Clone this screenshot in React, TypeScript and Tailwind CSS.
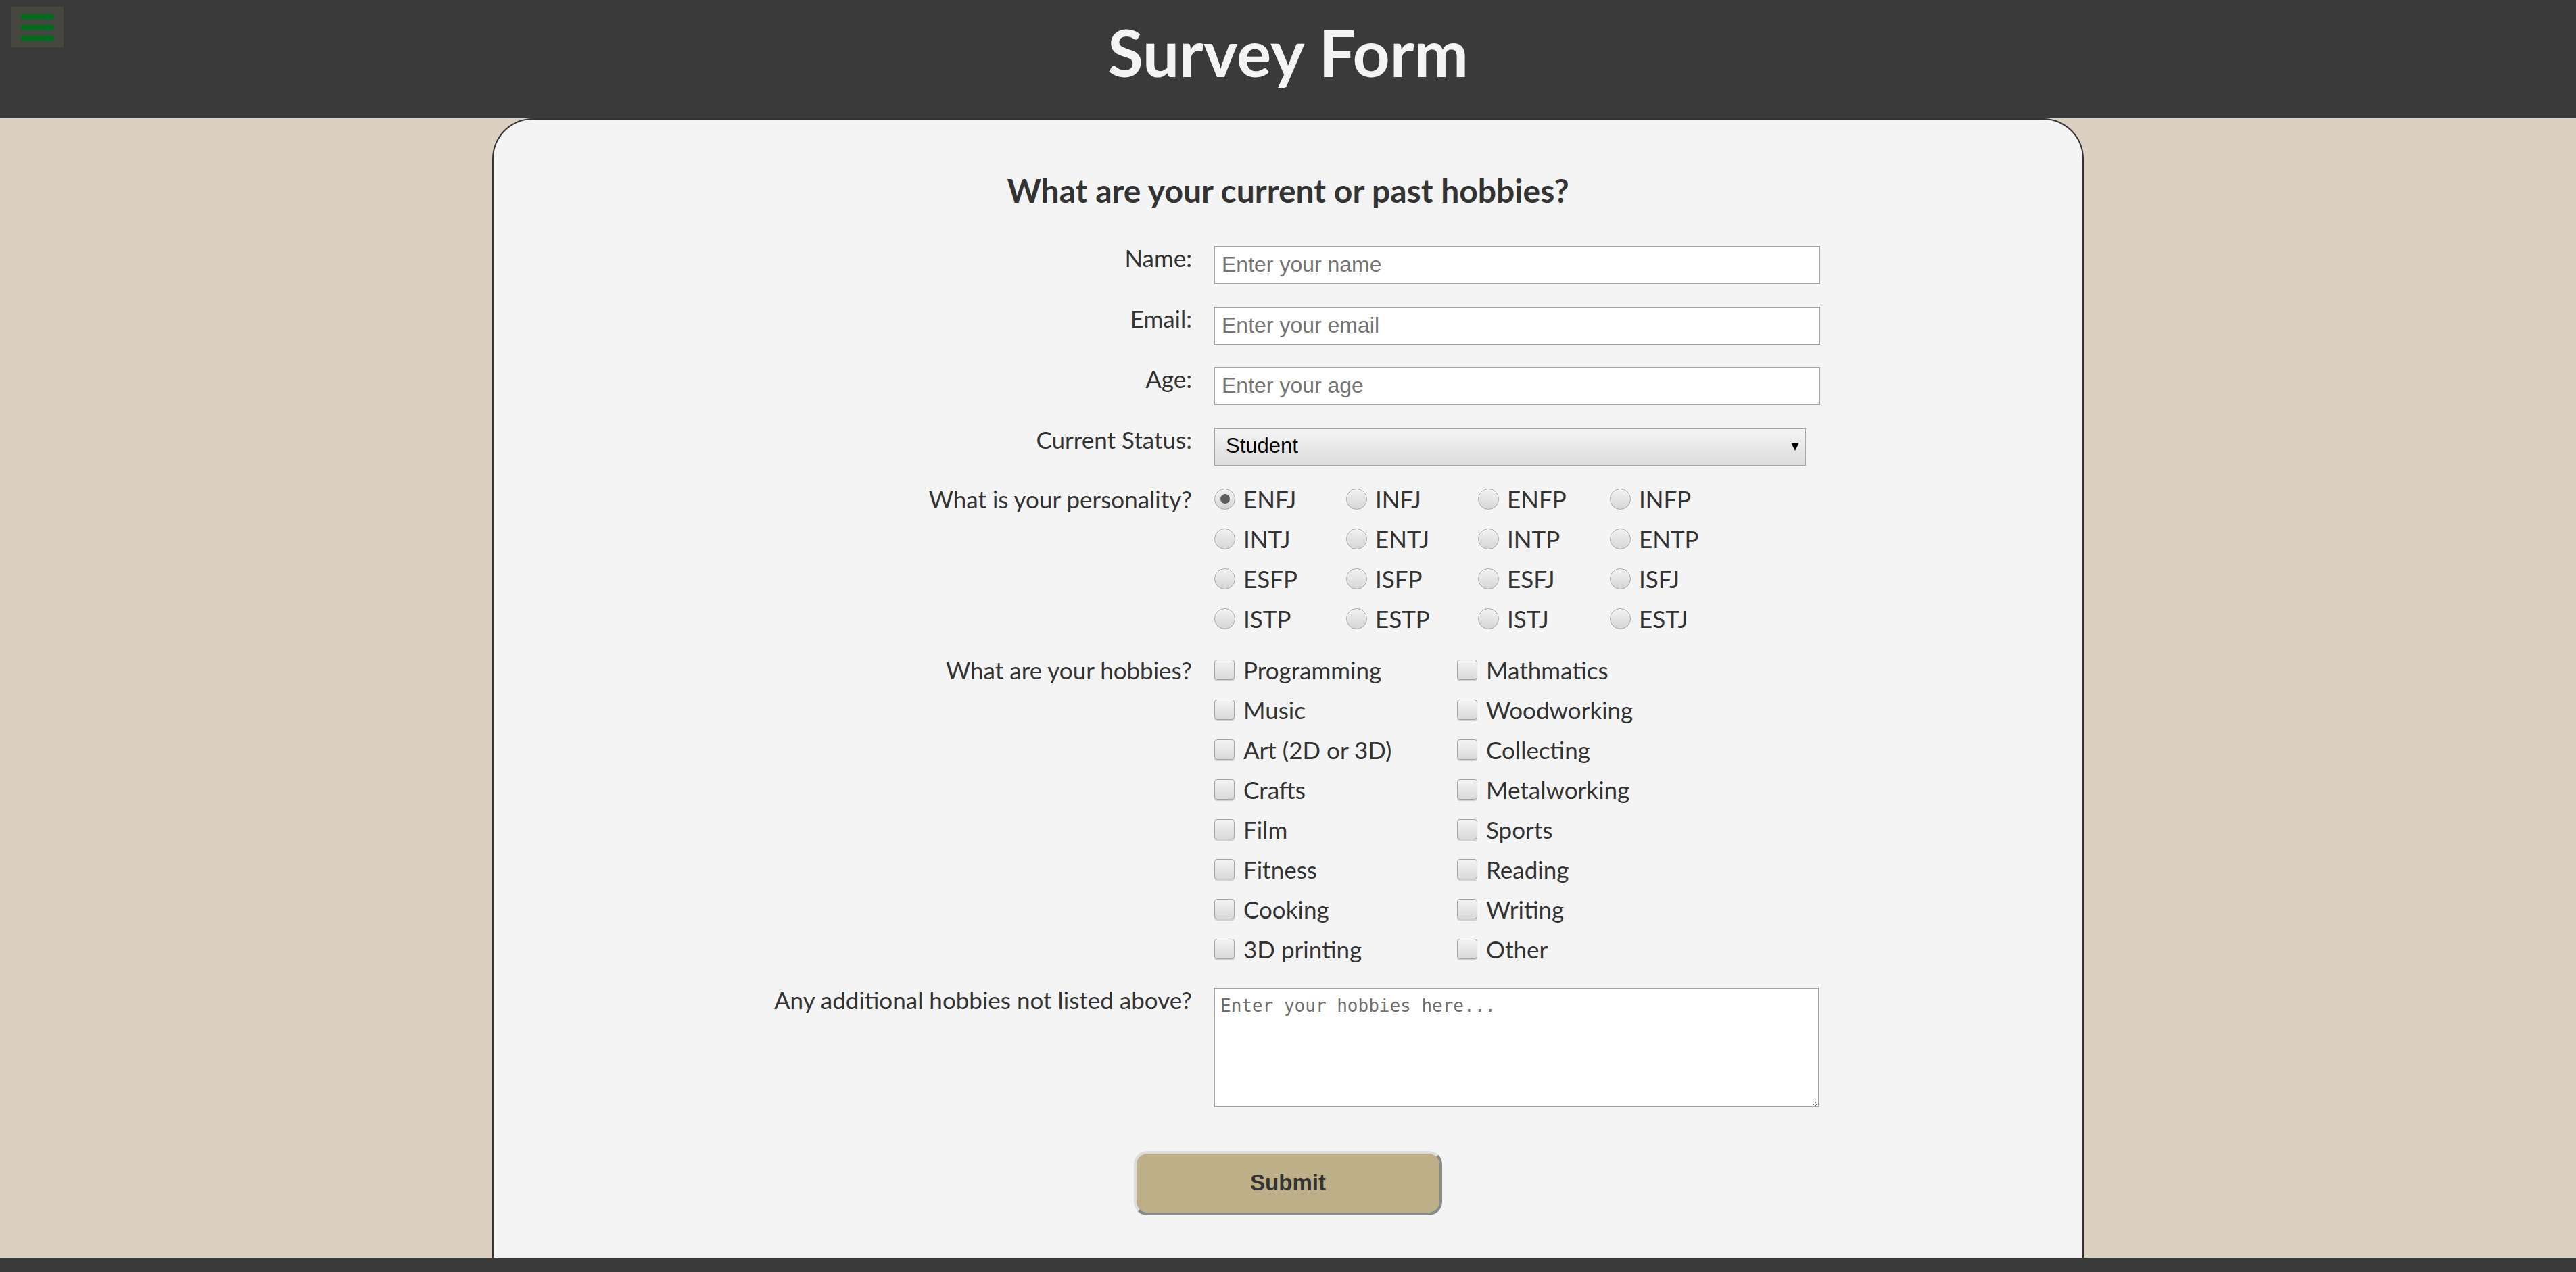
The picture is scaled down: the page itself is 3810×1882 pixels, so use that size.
import React from "react";

const personalities = [
  "ENFJ", "INFJ", "ENFP", "INFP",
  "INTJ", "ENTJ", "INTP", "ENTP",
  "ESFP", "ISFP", "ESFJ", "ISFJ",
  "ISTP", "ESTP", "ISTJ", "ESTJ",
];

const hobbies = [
  "Programming", "Mathmatics",
  "Music", "Woodworking",
  "Art (2D or 3D)", "Collecting",
  "Crafts", "Metalworking",
  "Film", "Sports",
  "Fitness", "Reading",
  "Cooking", "Writing",
  "3D printing", "Other",
];

function Radio({ checked }: { checked?: boolean }) {
  return (
    <span className="w-[31px] h-[31px] shrink-0 rounded-full border border-[#a6a6a6] bg-gradient-to-b from-[#f2f2f2] to-[#d6d6d6] shadow-[inset_0_1px_0_#fff] flex items-center justify-center">
      {checked && <span className="w-[14px] h-[14px] rounded-full bg-[#5e5e5e]" />}
    </span>
  );
}

function Checkbox() {
  return (
    <span className="w-[30px] h-[30px] shrink-0 rounded-[4px] border border-[#a3a3a3] bg-gradient-to-b from-[#f4f4f4] to-[#d9d9d9] shadow-[0_2px_0_#d0d0d0]" />
  );
}

export default function App() {
  return (
    <div className="min-h-screen flex flex-col bg-[#dcd0c0] font-['Lato',sans-serif] text-[#333]">
      {/* Header */}
      <header className="relative h-[175px] bg-[#3a3a3a] shrink-0">
        <button className="absolute left-[16px] top-[10px] w-[78px] h-[60px] bg-[#474742] flex flex-col gap-[8px] pt-[11px] pl-[14px]">
          <span className="w-[50px] h-[8px] rounded-full bg-[#006a1f]" />
          <span className="w-[50px] h-[8px] rounded-full bg-[#006a1f]" />
          <span className="w-[50px] h-[8px] rounded-full bg-[#006a1f]" />
        </button>
        <h1 className="pt-[19px] text-center text-[96px] leading-[1.2] font-bold text-[#f4f4f4]">
          Survey Form
        </h1>
      </header>

      {/* Card */}
      <main className="flex-1 flex justify-center">
        <div className="w-[2354px] border-2 border-b-0 border-[#333] rounded-t-[60px] bg-[#f4f4f4]">
          <h2 className="mt-[76px] text-center text-[48px] leading-[1.2] font-bold text-[#333]">
            What are your current or past hobbies?
          </h2>

          <form className="flex flex-col">
            <div className="grid grid-cols-[1033px_1fr] gap-x-[33px] mt-[49px]">
              <label className="text-right text-[35px] leading-[42px]">Name:</label>
              <input
                placeholder="Enter your name"
                className="mt-[4px] w-[896px] h-[56px] border border-[#a3a3a3] bg-white px-[10px] font-['Liberation_Sans',Arial,sans-serif] text-[32px] text-black placeholder:text-[#757575] outline-none"
              />
            </div>

            <div className="grid grid-cols-[1033px_1fr] gap-x-[33px] mt-[30px]">
              <label className="text-right text-[35px] leading-[42px]">Email:</label>
              <input
                placeholder="Enter your email"
                className="mt-[4px] w-[896px] h-[56px] border border-[#a3a3a3] bg-white px-[10px] font-['Liberation_Sans',Arial,sans-serif] text-[32px] text-black placeholder:text-[#757575] outline-none"
              />
            </div>

            <div className="grid grid-cols-[1033px_1fr] gap-x-[33px] mt-[29px]">
              <label className="text-right text-[35px] leading-[42px]">Age:</label>
              <input
                placeholder="Enter your age"
                className="mt-[4px] w-[896px] h-[56px] border border-[#a3a3a3] bg-white px-[10px] font-['Liberation_Sans',Arial,sans-serif] text-[32px] text-black placeholder:text-[#757575] outline-none"
              />
            </div>

            <div className="grid grid-cols-[1033px_1fr] gap-x-[33px] mt-[30px]">
              <label className="text-right text-[35px] leading-[42px]">Current Status:</label>
              <div className="relative mt-[4px] w-[875px] h-[56px]">
                <select className="appearance-none w-full h-full border border-[#a3a3a3] bg-gradient-to-b from-[#f5f5f5] to-[#dcdcdc] pl-[16px] font-['Liberation_Sans',Arial,sans-serif] text-[31px] text-black outline-none">
                  <option>Student</option>
                  <option>Full-time job</option>
                  <option>Part-time job</option>
                  <option>Unemployed</option>
                </select>
                <svg
                  className="absolute right-[10px] top-[22px] pointer-events-none"
                  width="12"
                  height="12"
                  viewBox="0 0 12 12"
                >
                  <path d="M0 0 L12 0 L6 12 Z" fill="#000" />
                </svg>
              </div>
            </div>

            <div className="grid grid-cols-[1033px_1fr] gap-x-[33px] mt-[20px]">
              <label className="text-right text-[35px] leading-[59px]">What is your personality?</label>
              <div className="grid grid-cols-[195px_195px_195px_195px]">
                {personalities.map((p, i) => (
                  <div key={p} className="h-[59px] flex items-center gap-[12px]">
                    <Radio checked={i === 0} />
                    <span className="text-[35px] leading-[42px]">{p}</span>
                  </div>
                ))}
              </div>
            </div>

            <div className="grid grid-cols-[1033px_1fr] gap-x-[33px] mt-[17px]">
              <label className="text-right text-[35px] leading-[59px]">What are your hobbies?</label>
              <div className="grid grid-cols-[359px_359px]">
                {hobbies.map((h) => (
                  <div key={h} className="h-[59px] flex items-center gap-[13px]">
                    <Checkbox />
                    <span className="text-[35px] leading-[42px]">{h}</span>
                  </div>
                ))}
              </div>
            </div>

            <div className="grid grid-cols-[1033px_1fr] gap-x-[33px] mt-[24px]">
              <label className="text-right text-[35px] leading-[42px]">
                Any additional hobbies not listed above?
              </label>
              <textarea
                placeholder="Enter your hobbies here..."
                className="mt-[4px] w-[894px] h-[176px] border border-[#a3a3a3] bg-white px-[8px] pt-[6px] font-['DejaVu_Sans_Mono',monospace] text-[26px] text-black placeholder:text-[#6f6f6f] outline-none"
              />
            </div>

            <button
              type="submit"
              className="mx-auto mt-[65px] w-[456px] h-[95px] rounded-[20px] border-4 border-t-[#dcdcdc] border-l-[#dcdcdc] border-r-[#8a8a8a] border-b-[#8a8a8a] bg-[#bdb088] font-['Liberation_Sans',Arial,sans-serif] text-[33px] font-bold text-[#333]"
            >
              Submit
            </button>
          </form>
        </div>
      </main>

      {/* Footer */}
      <footer className="h-[21px] shrink-0 bg-[#3a3a3a]" />
    </div>
  );
}
